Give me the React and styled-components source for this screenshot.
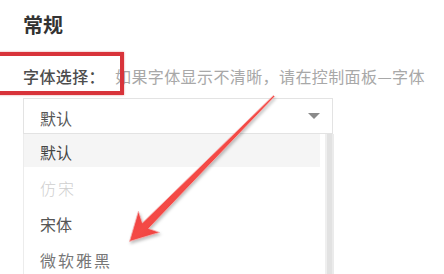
import React from 'react'
import styled, { createGlobalStyle } from 'styled-components'

const GlobalStyle = createGlobalStyle`
html, body {
    margin: 0;
    padding: 0;
    background: #fff;
    overflow: hidden;
}
body {
    font-family: "Noto Sans CJK SC", "Noto Sans", sans-serif;
}
`

const options = [
    { label: '默认', color: '#444', active: true },
    { label: '仿宋', color: '#cfcfcf', spacing: 2, weight: 300 },
    { label: '宋体', color: '#555' },
    { label: '微软雅黑', color: '#777', spacing: 2 },
]

const App = () => {
    return (
        <>
            <GlobalStyle />
            <Page>
                <Title>常规</Title>
                <FieldRow>
                    <Label>字体选择：</Label>
                    <Hint>如果字体显示不清晰，请在控制面板—字体</Hint>
                </FieldRow>
                <SelectBox>
                    <span>默认</span>
                    <Caret />
                </SelectBox>
                <DropList>
                    <Options>
                        {options.map(o => (
                            <Option key={o.label} $active={o.active} $color={o.color} $spacing={o.spacing} $weight={o.weight}>
                                {o.label}
                            </Option>
                        ))}
                    </Options>
                    <ScrollTrack />
                </DropList>

                <MarkBox />
                <ArrowLayer width="444" height="274" viewBox="0 0 444 274">
                    <defs>
                        <linearGradient id="arrowFill" x1="0" y1="0" x2="1" y2="1">
                            <stop offset="0" stopColor="#d9202a" />
                            <stop offset="0.5" stopColor="#f44a46" />
                            <stop offset="1" stopColor="#d41e28" />
                        </linearGradient>
                    </defs>
                    <polygon
                        points="273.4,95.4 142.4,222.9 138.4,211.2 129.5,241.5 159.6,232.4 148.6,228.5 274.6,96.6"
                        fill="url(#arrowFill)"
                        stroke="#f6b3b3"
                        strokeWidth="0.8"
                        strokeLinejoin="round"
                    />
                </ArrowLayer>
            </Page>
        </>
    )
}

const Page = styled.div`
position: relative;
width: 444px;
height: 274px;
overflow: hidden;
box-sizing: border-box;
padding: 15px 0 0 23px;
`

const Title = styled.h2`
margin: 0;
font-size: 20px;
line-height: 20px;
font-weight: 700;
color: #333;
`

const FieldRow = styled.div`
margin-top: 29px;
height: 24px;
display: flex;
align-items: center;
white-space: nowrap;
font-size: 16px;
letter-spacing: 0.4px;
`

const Label = styled.span`
color: #4d4d4d;
font-weight: 500;
flex: none;
`

const Hint = styled.span`
margin-left: 10px;
color: #a8a8a8;
flex: none;
`

const SelectBox = styled.div`
margin-top: 10px;
width: 310px;
height: 36px;
box-sizing: border-box;
border: 1px solid #e3e3e3;
display: flex;
align-items: center;
justify-content: space-between;
padding: 3px 12px 0 16px;
font-size: 16px;
color: #555;
`

const Caret = styled.i`
width: 0;
height: 0;
border-left: 6px solid transparent;
border-right: 6px solid transparent;
border-top: 6px solid #8a8a8a;
margin-top: -3px;
`

const DropList = styled.div`
width: 311px;
height: 160px;
box-sizing: border-box;
border-left: 1px solid #ececec;
display: flex;
`

const Options = styled.div`
flex: 1;
padding-right: 5px;
display: flex;
flex-direction: column;
`

const Option = styled.div`
height: 36px;
line-height: 36px;
padding-left: 16px;
font-size: 16px;
color: ${p => p.$color};
letter-spacing: ${p => p.$spacing || 0}px;
font-weight: ${p => p.$weight || 400};
background: ${p => p.$active ? 'linear-gradient(#f5f5f5 0 33px, transparent 33px)' : 'none'};
`

const ScrollTrack = styled.div`
width: 9px;
background: linear-gradient(90deg, #efefef 0 2px, #e2e2e2 2px 7px, #ebebeb 7px);
`

const MarkBox = styled.div`
position: absolute;
left: -4px;
top: 52px;
width: 128px;
height: 43px;
box-sizing: border-box;
border: 4px solid #d8333a;
box-shadow: 0 0 2px rgba(200, 30, 30, 0.45);
`

const ArrowLayer = styled.svg`
position: absolute;
left: 0;
top: 0;
pointer-events: none;
filter: drop-shadow(1px 2px 1.5px rgba(0, 0, 0, 0.25));
`

export default App
